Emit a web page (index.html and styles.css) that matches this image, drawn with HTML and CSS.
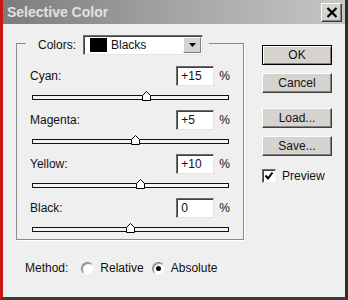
FILE: index.html
```html
<!DOCTYPE html>
<html lang="en">
<head>
    <meta charset="UTF-8">
    <title>Selective Color</title>
    <link rel="stylesheet" href="styles.css">
</head>
<body>
    <div class="window">
        <div class="titlebar">
            <span class="title">Selective Color</span>
            <button class="close-button">
                <svg viewBox="0 0 12 11" width="12" height="11">
                    <path d="M1.5 1 L10.5 10 M10.5 1 L1.5 10" stroke="#000" stroke-width="2.2"/>
                </svg>
            </button>
        </div>
        <div class="dialog">
            <div class="main">
                <fieldset class="group">
                    <legend class="group-legend">
                        <span class="colors-label">Colors:</span>
                        <span class="select">
                            <span class="swatch"></span>
                            <span class="select-text">Blacks</span>
                            <span class="select-arrow">
                                <svg viewBox="0 0 7 4" width="7" height="4"><path d="M0 0 H7 L3.5 4 Z" fill="#000"/></svg>
                            </span>
                        </span>
                    </legend>

                    <div class="control">
                        <div class="control-row">
                            <span class="control-label">Cyan:</span>
                            <input class="value-input" type="text" value="+15">
                            <span class="percent">%</span>
                        </div>
                        <div class="track">
                            <svg class="thumb" style="left: 109px" viewBox="0 0 9 10" width="9" height="10"><path d="M0.5 9.5 V4.5 L4.5 0.5 L8.5 4.5 V9.5 Z" fill="#fff" stroke="#000"/></svg>
                        </div>
                    </div>

                    <div class="control">
                        <div class="control-row">
                            <span class="control-label">Magenta:</span>
                            <input class="value-input" type="text" value="+5">
                            <span class="percent">%</span>
                        </div>
                        <div class="track">
                            <svg class="thumb" style="left: 98px" viewBox="0 0 9 10" width="9" height="10"><path d="M0.5 9.5 V4.5 L4.5 0.5 L8.5 4.5 V9.5 Z" fill="#fff" stroke="#000"/></svg>
                        </div>
                    </div>

                    <div class="control">
                        <div class="control-row">
                            <span class="control-label">Yellow:</span>
                            <input class="value-input" type="text" value="+10">
                            <span class="percent">%</span>
                        </div>
                        <div class="track">
                            <svg class="thumb" style="left: 103px" viewBox="0 0 9 10" width="9" height="10"><path d="M0.5 9.5 V4.5 L4.5 0.5 L8.5 4.5 V9.5 Z" fill="#fff" stroke="#000"/></svg>
                        </div>
                    </div>

                    <div class="control">
                        <div class="control-row">
                            <span class="control-label">Black:</span>
                            <input class="value-input" type="text" value="0">
                            <span class="percent">%</span>
                        </div>
                        <div class="track">
                            <svg class="thumb" style="left: 93px" viewBox="0 0 9 10" width="9" height="10"><path d="M0.5 9.5 V4.5 L4.5 0.5 L8.5 4.5 V9.5 Z" fill="#fff" stroke="#000"/></svg>
                        </div>
                    </div>
                </fieldset>

                <div class="method-row">
                    <span class="method-label">Method:</span>
                    <span class="radio"></span>
                    <span class="radio-text">Relative</span>
                    <span class="radio checked"></span>
                    <span class="radio-text">Absolute</span>
                </div>
            </div>

            <div class="side">
                <button class="btn btn-default">OK</button>
                <button class="btn">Cancel</button>
                <button class="btn btn-spaced">Load...</button>
                <button class="btn">Save...</button>
                <div class="preview-row">
                    <span class="checkbox">
                        <svg viewBox="0 0 10 10" width="10" height="10"><path d="M1.5 4.5 L4 7.5 L8.5 1.5" fill="none" stroke="#000" stroke-width="2"/></svg>
                    </span>
                    <span class="preview-text">Preview</span>
                </div>
            </div>
        </div>
    </div>
</body>
</html>
```

FILE: styles.css
```css
:root {
    --dialog-bg: #efefef;
    --button-face: #d6d3ce;
    --shadow-dark: #404040;
    --shadow-mid: #808080;
    --group-line: #8c8c8c;
    --text-color: #111;
}

* {
    margin: 0;
    padding: 0;
    box-sizing: border-box;
}

body {
    font-family: 'Liberation Sans', Arial, sans-serif;
    font-size: 12px;
    color: var(--text-color);
    background: var(--dialog-bg);
}

.window {
    width: 348px;
    height: 300px;
    display: flex;
    flex-direction: column;
    background: var(--dialog-bg);
    border-left: 3px solid #cc1414;
    border-right: 3px solid #2c2f2a;
    border-bottom: 3px solid #3c3c3c;
}

.titlebar {
    height: 24px;
    display: flex;
    align-items: flex-start;
    justify-content: space-between;
    background: linear-gradient(to right, #7c7c7c, #a4a4a4 50%, #c6c6c6);
}

.title {
    padding: 4px 0 0 4px;
    font-size: 14px;
    font-weight: bold;
    color: #e2e2e2;
}

.close-button {
    width: 21px;
    height: 19px;
    margin: 3px 3px 0 0;
    display: flex;
    align-items: center;
    justify-content: center;
    background: var(--button-face);
    border: 1px solid;
    border-color: #fff var(--shadow-dark) var(--shadow-dark) #fff;
    box-shadow: inset -1px -1px 0 var(--shadow-mid);
}

.dialog {
    flex: 1;
    display: flex;
}

.main {
    padding-left: 13px;
}

.group {
    width: 228px;
    margin-top: 7px;
    padding: 11px 13px 7px 13px;
    border: 1px solid var(--group-line);
    box-shadow: 1px 1px 0 #fff;
    display: flex;
    flex-direction: column;
    gap: 10px;
}

.group-legend {
    margin-left: -4px;
    padding: 4px 6px 0 12px;
    display: flex;
    align-items: center;
}

.colors-label {
    width: 45px;
}

.select {
    width: 120px;
    height: 20px;
    display: flex;
    align-items: center;
    background: #fff;
    border: 1px solid;
    border-color: #6c6c6c #e4e4e4 #e4e4e4 #6c6c6c;
    box-shadow: inset 1px 1px 0 #404040;
}

.swatch {
    width: 17px;
    height: 14px;
    margin-left: 6px;
    background: #000;
}

.select-text {
    flex: 1;
    margin-left: 4px;
}

.select-arrow {
    width: 18px;
    height: 16px;
    margin-right: 1px;
    display: flex;
    align-items: center;
    justify-content: center;
    background: var(--button-face);
    border: 1px solid;
    border-color: #fff var(--shadow-mid) var(--shadow-mid) #fff;
}

.control {
    display: flex;
    flex-direction: column;
}

.control-row {
    height: 20px;
    display: flex;
    align-items: center;
}

.control-label {
    flex: 1;
}

.value-input {
    width: 38px;
    height: 20px;
    padding-left: 4px;
    font-family: inherit;
    font-size: 12px;
    color: var(--text-color);
    background: #fff;
    border: 1px solid;
    border-color: #6c6c6c #e4e4e4 #e4e4e4 #6c6c6c;
    box-shadow: inset 1px 1px 0 #404040;
    outline: none;
}

.percent {
    margin-left: 5px;
}

.track {
    position: relative;
    height: 5px;
    margin: 9px 1px 0 2px;
    background: #f4f4f4;
    border: 1px solid #111;
}

.thumb {
    position: absolute;
    bottom: -2px;
    display: block;
}

.method-row {
    margin: 20px 0 0 9px;
    height: 16px;
    display: flex;
    align-items: center;
}

.method-label {
    margin-right: 13px;
}

.radio {
    width: 13px;
    height: 13px;
    margin-right: 6px;
    border-radius: 50%;
    background: #fff;
    border: 1px solid;
    border-color: var(--shadow-mid) #f4f4f4 #f4f4f4 var(--shadow-mid);
    box-shadow: inset 1px 1px 0 #9a9a9a;
    display: flex;
    align-items: center;
    justify-content: center;
}

.radio.checked::after {
    content: "";
    width: 5px;
    height: 5px;
    border-radius: 50%;
    background: #000;
}

.radio-text {
    margin-right: 8px;
}

.side {
    padding: 21px 0 0 18px;
    display: flex;
    flex-direction: column;
    gap: 8px;
}

.btn {
    width: 70px;
    height: 20px;
    font-family: inherit;
    font-size: 12px;
    color: var(--text-color);
    background: var(--button-face);
    border: 1px solid;
    border-color: #fff var(--shadow-dark) var(--shadow-dark) #fff;
    box-shadow: inset -1px -1px 0 var(--shadow-mid);
}

.btn-default {
    border: 1px solid #000;
    box-shadow: inset 1px 1px 0 #fff, inset -1px -1px 0 var(--shadow-mid);
}

.btn-spaced {
    margin-top: 7px;
}

.preview-row {
    margin-top: 5px;
    display: flex;
    align-items: center;
    gap: 6px;
}

.checkbox {
    width: 14px;
    height: 14px;
    display: flex;
    align-items: center;
    justify-content: center;
    background: #fff;
    border: 1px solid;
    border-color: #6c6c6c #f4f4f4 #f4f4f4 #6c6c6c;
    box-shadow: inset 1px 1px 0 #404040;
}
```
